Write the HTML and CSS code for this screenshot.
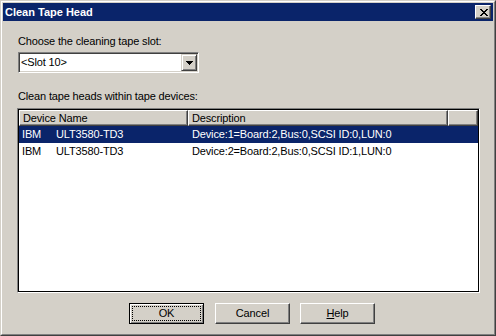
FILE: index.html
```html
<!DOCTYPE html>
<html>
<head>
<meta charset="utf-8">
<title>Clean Tape Head</title>
<link rel="stylesheet" href="styles.css">
</head>
<body>
<div class="window">
  <div class="frame">
    <div class="titlebar">
      <span class="title">Clean Tape Head</span>
      <button class="close" aria-label="Close">
        <svg width="8" height="7" viewBox="0 0 8 7" shape-rendering="crispEdges"><path fill="#000" d="M0 0h2v1h-2zM6 0h2v1h-2zM1 1h2v1h-2zM5 1h2v1h-2zM2 2h4v1h-4zM3 3h2v1h-2zM2 4h4v1h-4zM1 5h2v1h-2zM5 5h2v1h-2zM0 6h2v1h-2zM6 6h2v1h-2z"/></svg>
      </button>
    </div>
    <div class="client">
      <div class="label">Choose the cleaning tape slot:</div>
      <div class="combo">
        <span class="combo-text">&lt;Slot 10&gt;</span>
        <span class="combo-btn">
          <svg width="7" height="4" viewBox="0 0 7 4" shape-rendering="crispEdges"><path fill="#000" d="M0 0h7v1h-7zM1 1h5v1h-5zM2 2h3v1h-3zM3 3h1v1h-1z"/></svg>
        </span>
      </div>
      <div class="label label2">Clean tape heads within tape devices:</div>
      <div class="list">
        <div class="list-inner">
          <div class="header">
            <div class="hcell c1">Device Name</div>
            <div class="hcell c2">Description</div>
            <div class="hcell c3"></div>
          </div>
          <div class="row selected">
            <div class="cell c1"><span class="vendor">IBM</span>ULT3580-TD3</div>
            <div class="cell c2">Device:1=Board:2,Bus:0,SCSI ID:0,LUN:0</div>
          </div>
          <div class="row">
            <div class="cell c1"><span class="vendor">IBM</span>ULT3580-TD3</div>
            <div class="cell c2">Device:2=Board:2,Bus:0,SCSI ID:1,LUN:0</div>
          </div>
        </div>
      </div>
      <div class="buttons">
        <button class="btn default">OK</button>
        <button class="btn cancel">Cancel</button>
        <button class="btn help"><u>H</u>elp</button>
      </div>
    </div>
  </div>
</div>
</body>
</html>
```
FILE: styles.css
```css
* { box-sizing: border-box; }
html, body { margin: 0; padding: 0; }
body {
  background: #d4d0c8;
  font-family: "Liberation Sans", Arial, sans-serif;
  font-size: 11px;
  letter-spacing: -0.15px;
  color: #000;
}
.window {
  width: 496px;
  height: 336px;
  border: 1px solid;
  border-color: #d4d0c8 #404040 #404040 #d4d0c8;
  background: #d4d0c8;
}
.frame {
  height: 100%;
  border: 1px solid;
  border-color: #fff #808080 #808080 #fff;
  padding: 1px;
  display: flex;
  flex-direction: column;
}
.titlebar {
  height: 18px;
  flex: none;
  background: #0a246a;
  display: flex;
  align-items: center;
  padding: 0 2px 0 2px;
}
.title {
  color: #fff;
  font-weight: bold;
  letter-spacing: 0;
  line-height: 18px;
}
.close {
  margin-left: auto;
  width: 16px;
  height: 14px;
  padding: 0;
  border: 1px solid;
  border-color: #fff #404040 #404040 #fff;
  box-shadow: inset -1px -1px #808080;
  background: #d4d0c8;
  display: flex;
  align-items: center;
  justify-content: center;
}
.close svg { display: block; margin-left: 1px; }
.client {
  flex: 1;
  padding: 14px 0 0 15px;
}
.label {
  line-height: 13px;
  height: 13px;
  white-space: nowrap;
}
.combo {
  margin-top: 4px;
  width: 181px;
  height: 21px;
  border: 1px solid;
  border-color: #808080 #fff #fff #808080;
  padding: 1px;
  background: #fff;
  box-shadow: inset 1px 1px #404040, inset -1px -1px #d4d0c8;
  display: flex;
}
.combo-text {
  flex: 1;
  line-height: 17px;
  padding-left: 1px;
}
.combo-btn {
  width: 16px;
  height: 17px;
  background: #d4d0c8;
  border: 1px solid;
  border-color: #d4d0c8 #404040 #404040 #d4d0c8;
  box-shadow: inset 1px 1px #fff, inset -1px -1px #808080;
  display: flex;
  align-items: center;
  justify-content: center;
}
.combo-btn svg { display: block; }
.label2 { margin-top: 17px; }
.list {
  margin-top: 5px;
  margin-left: -1px;
  width: 463px;
  height: 185px;
  border: 1px solid;
  border-color: #808080 #fff #fff #808080;
}
.list-inner {
  height: 100%;
  border: 1px solid #000;
  background: #fff;
}
.header {
  display: flex;
  height: 16px;
}
.hcell {
  height: 16px;
  line-height: 14px;
  padding-left: 3px;
  background: #d4d0c8;
  border: 1px solid;
  border-color: #fff #404040 #404040 #fff;
  box-shadow: inset -1px -1px #808080;
  white-space: nowrap;
}
.c1 { width: 169px; flex: none; }
.c2 { width: 260px; flex: none; }
.c3 { flex: 1; }
.row {
  display: flex;
  height: 17px;
  line-height: 17px;
}
.row.selected {
  background: #0a246a;
  color: #fff;
}
.cell { white-space: nowrap; }
.cell.c1 { padding-left: 3px; }
.cell.c2 { padding-left: 4px; }
.vendor {
  display: inline-block;
  width: 34px;
}
.buttons {
  margin-top: 10px;
  padding-left: 111px;
  display: flex;
}
.btn {
  font: inherit;
  letter-spacing: inherit;
  color: #000;
  width: 75px;
  height: 21px;
  padding: 0;
  line-height: 17px;
  background: #d4d0c8;
  border: 1px solid;
  border-color: #fff #404040 #404040 #fff;
  box-shadow: inset -1px -1px #808080;
}
.btn.default {
  border-color: #000;
  box-shadow: inset 1px 1px #fff, inset -1px -1px #808080;
  outline: 1px dotted #000;
  outline-offset: -4px;
  margin-right: 11px;
}
.btn.cancel { margin-right: 10px; }
.btn u { text-underline-offset: 1px; }
```
